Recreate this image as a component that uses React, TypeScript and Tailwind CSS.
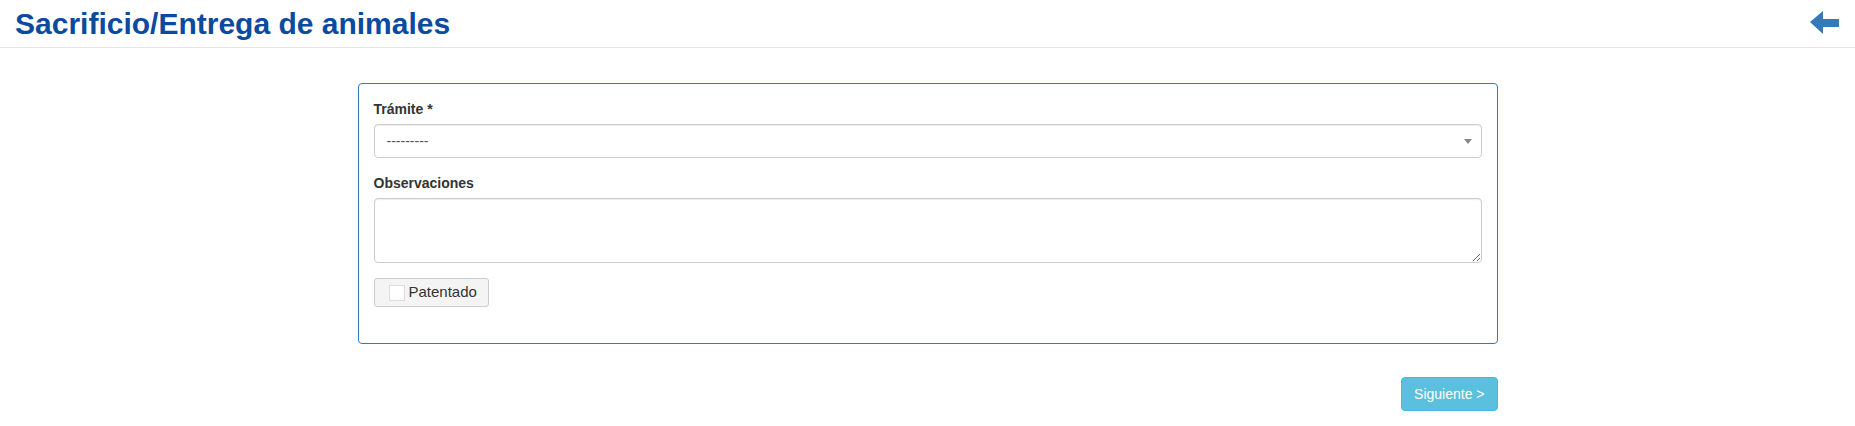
export default function App() {
  return (
    <div className="min-h-screen bg-white text-[14px] text-[#333]" style={{ fontFamily: '"Liberation Sans", Arial, sans-serif' }}>
      {/* Header */}
      <div className="flex h-[48px] items-center justify-between border-b border-[#e5e5e5] pl-[15px] pr-[15px]">
        <h1 className="text-[30px] font-bold leading-none text-[#0b4a9e]">Sacrificio/Entrega de animales</h1>
        <svg width="30" height="24" viewBox="0 0 30 24" className="mb-[1px]">
          <path d="M0 11 L13 0 L13 8 L29 8 L29 16 L13 16 L13 23 Z" fill="#337ab7" />
        </svg>
      </div>

      <div className="mx-auto w-[1140px] pt-[35px]">
        {/* Panel */}
        <div className="rounded-[4px] border border-[#337ab7] px-[15px] pb-[36px] pt-[15px]">
          <div className="mb-[15px]">
            <label className="mb-[5px] block font-bold leading-[20px]">Trámite *</label>
            <div className="relative flex h-[34px] items-center rounded-[4px] border border-[#ccc] pl-[12px] shadow-[inset_0_1px_1px_rgba(0,0,0,0.075)]">
              <span className="text-[#555]">---------</span>
              <span className="absolute right-[9px] top-[14px] h-0 w-0 border-l-[4px] border-r-[4px] border-t-[5px] border-l-transparent border-r-transparent border-t-[#888]" />
            </div>
          </div>
          <div className="mb-[15px]">
            <label className="mb-[5px] block font-bold leading-[20px]">Observaciones</label>
            <textarea className="block h-[65px] w-full rounded-[4px] border border-[#ccc] px-[12px] py-[6px] shadow-[inset_0_1px_1px_rgba(0,0,0,0.075)] outline-none" />
          </div>
          <label className="inline-flex h-[29px] items-center gap-[4px] rounded-[3px] border border-[#ccc] bg-[#f4f4f4] pl-[14px] pr-[11px] text-[15px] text-[#333]">
            <span className="h-[16px] w-[16px] border border-[#ddd] bg-white" />
            Patentado
          </label>
        </div>

        <div className="flex justify-end pt-[33px]">
          <button className="h-[34px] rounded-[4px] border border-[#46b8da] bg-[#5bc0de] px-[12px] text-[14px] text-white">Siguiente &gt;</button>
        </div>
      </div>
    </div>
  );
}
